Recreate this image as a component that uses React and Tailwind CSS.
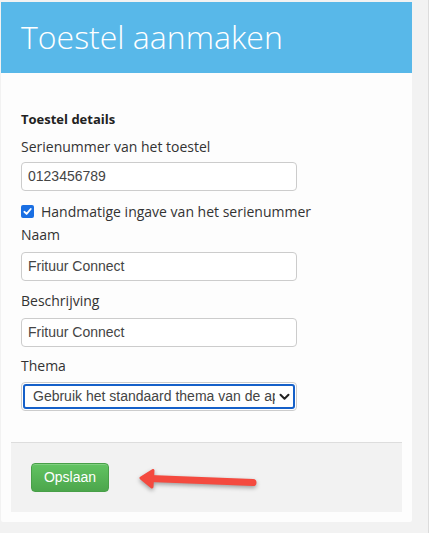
export default function App() {
  const label = "block text-[14px] leading-[20px] text-[#333]";
  const input =
    "block w-[276px] h-[29px] px-[6px] border border-[#ccc] rounded-[4px] bg-white text-[14px] text-[#444] flex items-center";

  return (
    <div className="min-h-[533px] w-[429px] bg-[#f2f2f2] pt-[2px] pl-[1px] font-['Open_Sans',sans-serif] border-r border-[#dcdcdc]">
      <div className="w-[411px] bg-[#fdfdfd] rounded-[2px] pb-[10px]">
        {/* header */}
        <div className="h-[71px] bg-[#58b8e9] pl-[20px] pt-[13px]">
          <h1 className="text-[32px] font-light leading-[44px] text-white">Toestel aanmaken</h1>
        </div>

        {/* form */}
        <div className="pl-[20px] pt-[36px]">
          <div className="text-[13px] font-bold leading-[20px] text-[#222]">Toestel details</div>

          <label className={label + " mt-[8px] mb-[5px]"}>Serienummer van het toestel</label>
          <div className={input + " font-['Liberation_Sans',Arial,sans-serif]"}>0123456789</div>

          <div className="mt-[10px] flex items-center h-[20px]">
            <span className="w-[13px] h-[13px] rounded-[2px] bg-[#1a6fe3] flex items-center justify-center">
              <svg width="9" height="9" viewBox="0 0 10 10" fill="none">
                <path d="M1.5 5.3 L4 7.7 L8.6 2.2" stroke="white" strokeWidth="2" strokeLinecap="round" strokeLinejoin="round" />
              </svg>
            </span>
            <span className="ml-[7px] text-[14px] text-[#333]">Handmatige ingave van het serienummer</span>
          </div>

          <label className={label + " mt-[4px] mb-[7px]"}>Naam</label>
          <div className={input + " font-['Liberation_Sans',Arial,sans-serif]"}>Frituur Connect</div>

          <label className={label + " mt-[10px] mb-[7px]"}>Beschrijving</label>
          <div className={input + " font-['Liberation_Sans',Arial,sans-serif]"}>Frituur Connect</div>

          <label className={label + " mt-[9px] mb-[6px]"}>Thema</label>
          <div className="w-[276px] h-[29px] border border-[#ccc] rounded-[4px] bg-white p-[1px]">
            <div className="h-full rounded-[3px] border-2 border-[#1560c9] flex items-center pl-[8px] pr-[3px] font-['Liberation_Sans',Arial,sans-serif] text-[14px] text-[#444]">
              <span className="w-[242px] overflow-hidden whitespace-nowrap">Gebruik het standaard thema van de applicatie</span>
              <svg className="ml-auto" width="11" height="8" viewBox="0 0 11 8" fill="none">
                <path d="M1.5 1.8 L5.5 5.8 L9.5 1.8" stroke="#222" strokeWidth="2" strokeLinecap="round" strokeLinejoin="round" />
              </svg>
            </div>
          </div>
        </div>

        {/* footer */}
        <div className="mx-[10px] mt-[31px] h-[70px] bg-[#f2f2f2] border-t border-[#dddddd] flex items-center pl-[20px]">
          <button className="w-[78px] h-[29px] rounded-[4px] border border-[#48a048] bg-gradient-to-b from-[#62c462] to-[#4ca64c] text-white text-[14px] font-['Liberation_Sans',Arial,sans-serif] shadow-[inset_0_1px_0_rgba(255,255,255,0.2)]">
            Opslaan
          </button>
          <svg className="ml-[27px] mt-[2px] drop-shadow-[0_2px_2px_rgba(0,0,0,0.35)]" width="124" height="30" viewBox="0 0 124 30" fill="none">
            <line x1="14" y1="14.5" x2="117" y2="18.5" stroke="#f44a3f" strokeWidth="7" strokeLinecap="round" />
            <polygon points="5,14 17,6.5 16,23" fill="#f44a3f" stroke="#f44a3f" strokeWidth="3" strokeLinejoin="round" />
          </svg>
        </div>
      </div>
    </div>
  );
}
